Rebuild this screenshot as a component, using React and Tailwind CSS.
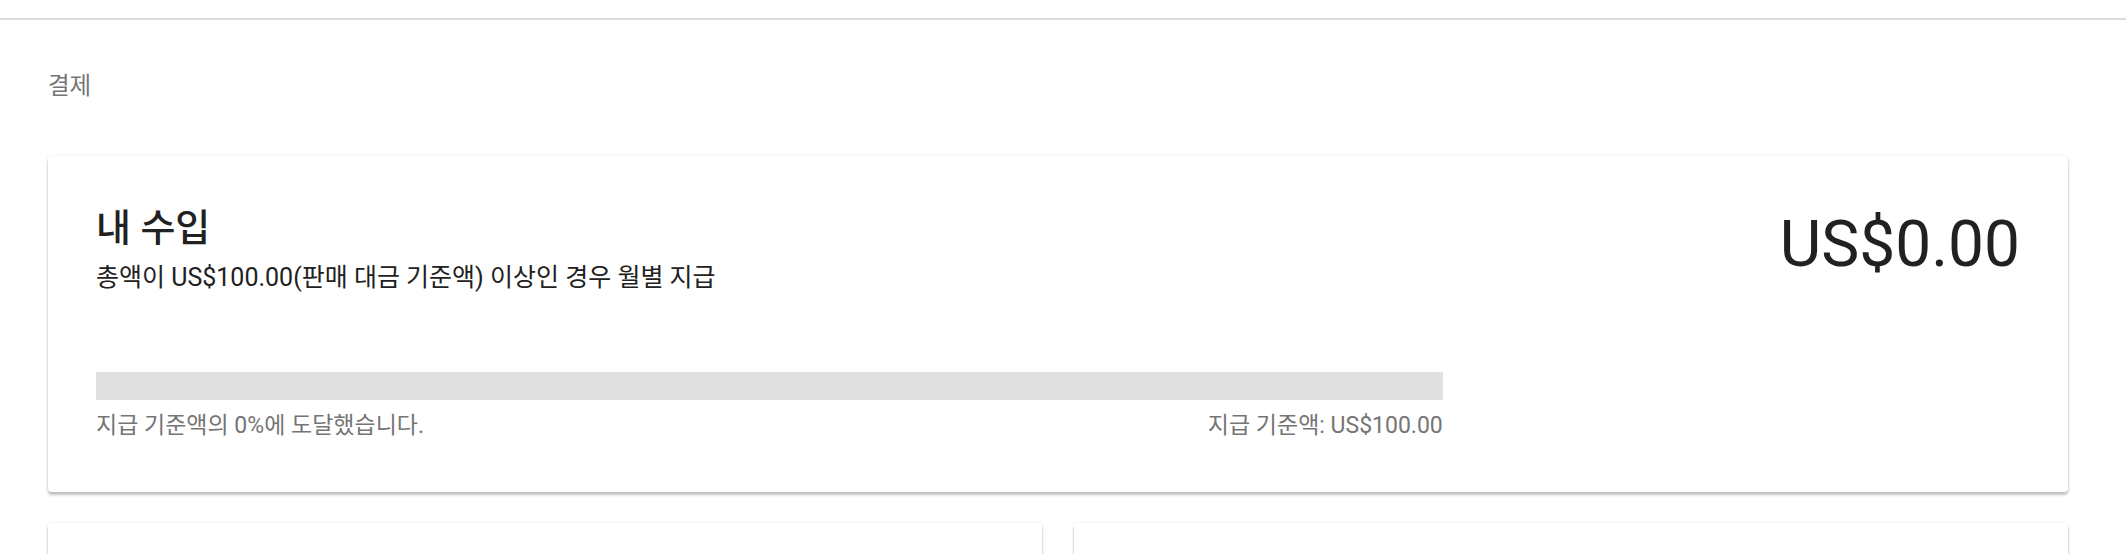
export default function App() {
  const font = { fontFamily: 'Roboto, "Noto Sans CJK KR", sans-serif' };
  const cardShadow =
    "shadow-[0_3px_3px_0_rgba(0,0,0,0.24),0_0_3px_0_rgba(0,0,0,0.10)]";
  return (
    <div className="w-[2126px] h-[554px] overflow-hidden bg-white" style={font}>
      <div className="h-[18px] bg-white" />
      <div className="h-[2px] bg-[#dcdce0]" />
      <div className="pl-[48px] pr-[58px]">
        <div className="pt-[50px] h-[136px] text-[23.5px] leading-[32px] text-[#757575]">
          결제
        </div>
        <div className={`bg-white rounded-[4px] ${cardShadow} px-[48px] pt-[50px] pb-[52px]`}>
          <div className="flex justify-between items-start">
            <div>
              <div className="text-[38px] leading-[44px] font-medium text-[#212121]">내 수입</div>
              <div className="mt-[12px] text-[25px] leading-[32px] text-[#212121]">
                총액이 US$100.00(판매 대금 기준액) 이상인 경우 월별 지급
              </div>
            </div>
            <div className="text-[64px] leading-[80px] text-[#212121] -mt-[1px]">
              US$0.00
            </div>
          </div>
          <div className="w-[70%] mt-[78px]">
            <div className="h-[28px] bg-[#e0e0e0]" />
            <div className="flex justify-between mt-[12px] text-[23px] leading-[28px] text-[#757575]">
              <span>지급 기준액의 0%에 도달했습니다.</span>
              <span>지급 기준액: US$100.00</span>
            </div>
          </div>
        </div>
        <div className="grid grid-cols-2 gap-[32px] mt-[31px]">
          <div className={`h-[200px] bg-white rounded-[4px] ${cardShadow}`} />
          <div className={`h-[200px] bg-white rounded-[4px] ${cardShadow}`} />
        </div>
      </div>
    </div>
  );
}
